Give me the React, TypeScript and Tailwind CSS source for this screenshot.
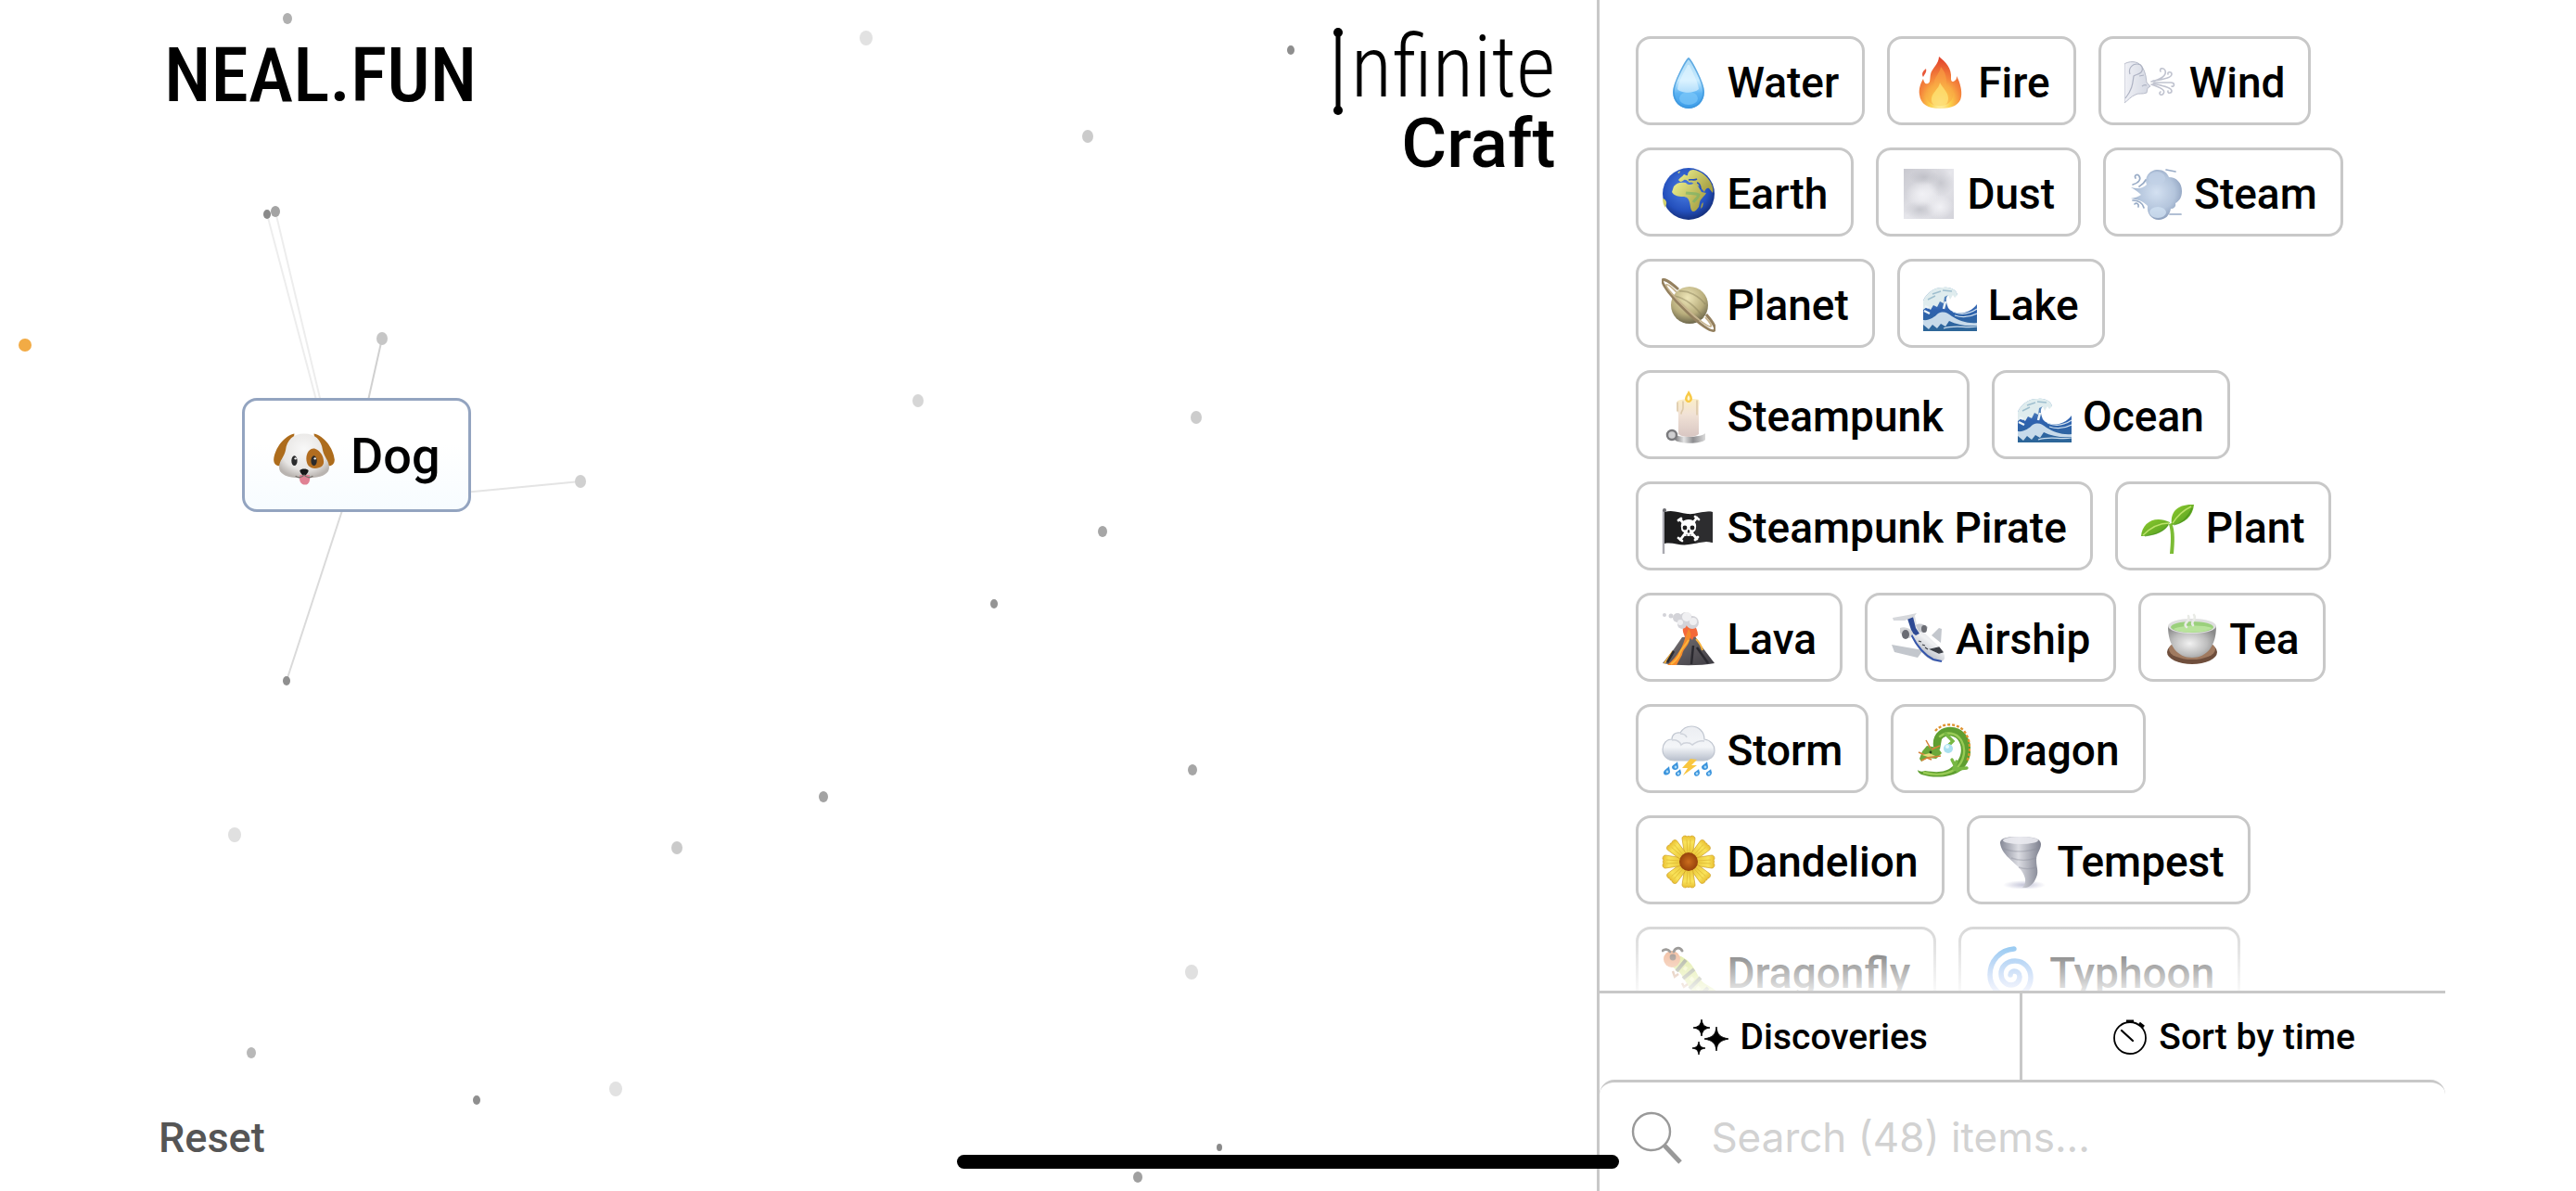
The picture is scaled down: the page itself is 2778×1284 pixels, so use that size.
import { useState } from 'react';
import type { ReactNode } from 'react';

/** Emoji-like drawings, all on a 58 x 58 grid. */
const icons: Record<string, ReactNode> = {
  droplet: (
    <>
      <defs>
        <linearGradient id="drop" x1="0" y1="0" x2="0" y2="1">
          <stop offset="0" stopColor="#a9d8f5" />
          <stop offset=".45" stopColor="#c9ecff" />
          <stop offset=".7" stopColor="#5db4f3" />
          <stop offset="1" stopColor="#3a9be8" />
        </linearGradient>
      </defs>
      <path d="M29 2C27 2 12 28 12 39c0 11 8 18 17 18s17-7 17-18C46 28 31 2 29 2z" fill="url(#drop)" />
      <path d="M29 3C27 4 13 28 13 39c0 10 7 17 16 17s16-7 16-17C45 28 31 4 29 3z" fill="none" stroke="#3d94d8" strokeWidth="1.6" opacity=".7" />
      <ellipse cx="29" cy="46" rx="10" ry="7" fill="#7cc8fa" opacity=".7" />
      <path d="M28 10c-2 5-10 17-11 26 4 5 18 5 23 0C39 27 31 14 30 10z" fill="#e6f7ff" opacity=".6" />
    </>
  ),
  fire: (
    <>
      <defs>
        <radialGradient id="fire" cx=".5" cy=".9" r=".85">
          <stop offset="0" stopColor="#fff8c0" />
          <stop offset=".28" stopColor="#fbd04a" />
          <stop offset=".58" stopColor="#f5883c" />
          <stop offset="1" stopColor="#e2452c" />
        </radialGradient>
      </defs>
      <path d="M28 1c7 6 14 12 13 24 0 3 2 4 4 2 2-1 2-3 2-5 4 7 6 16 5 22-1 9-10 13-23 13S8 52 7 42c-1-6 1-12 4-17 1 4 2 6 5 5 3-1 2-5 3-10 1-6 9-11 9-19z" fill="url(#fire)" />
      <path d="M30 12c5 6 6 10 6 17 0 5 4 7 6 9 4 8-3 16-13 16s-17-6-13-16c2-3 6-4 7-9 0-6 6-10 7-17z" fill="#f9a746" opacity=".55" />
      <path d="M29 29c3 6 9 10 9 17 0 6-4 9-9 9s-10-3-9-9c1-7 8-10 9-17z" fill="#fee777" opacity=".7" />
      <path d="M14 14c1 4-1 5-3 9-2-3-1-6 3-9z" fill="#e8583a" />
    </>
  ),
  wind: (
    <>
      <defs>
        <linearGradient id="face" x1="0" x2="1">
          <stop offset="0" stopColor="#f0f1f6" />
          <stop offset="1" stopColor="#d3d7e2" />
        </linearGradient>
      </defs>
      <path d="M0 9c4-3 14-4 18 2 3 3 4 7 5 11l1 7 4 4-3 2-1 5c-5 2-9 0-12 2C7 44 4 48 0 51z" fill="url(#face)" stroke="#b9bdcb" strokeWidth="1" />
      <path d="M6 20c-2-6 2-11 8-11 5 0 7 5 4 9-3 3-6 2-8 4-1 7-1 14-9 24M16 22l5-1M19 33c1-1 3-2 5-1" fill="none" stroke="#aeb3c3" strokeWidth="1.2" />
      <g fill="none" stroke="#c0c3cf" strokeWidth="1.6" strokeLinecap="round">
        <path d="M29 28c9-2 17-6 15-12-2-4-7-2-5 1M31 27c9-1 20-3 20-7 0-3-5-3-4 0M32 29h18c5 0 4 5 1 4M31 30c8 2 20 4 20 8 0 3-5 3-4 0M29 31c9 3 16 6 13 10-2 3-6 0-3-2" />
      </g>
    </>
  ),
  earth: (
    <>
      <defs>
        <radialGradient id="sea" cx=".45" cy=".4" r=".62">
          <stop offset="0" stopColor="#4f83e6" />
          <stop offset=".7" stopColor="#2450bd" />
          <stop offset="1" stopColor="#142d78" />
        </radialGradient>
        <linearGradient id="land" x1="0" x2="1" y2=".6">
          <stop offset="0" stopColor="#ecf08f" />
          <stop offset="1" stopColor="#a9a244" />
        </linearGradient>
      </defs>
      <circle cx="29" cy="29" r="28" fill="url(#sea)" />
      <g fill="url(#land)">
        <path d="M13 21c3-4 7-5 13-4 1 2 5 3 8 1l4 1 5 8 5 1c-2 4-6 6-7 10l-1 5c-2 3-4 5-6 5-3 0-3-7-4-10-1-4-3-6-7-6-5 0-10-1-12-5z" />
        <path d="M18 14c2-3 4-3 6-6 2 0 2 2 4 1 0-3 2-6 6-6 8 1 15 7 19 14 2 4 3 8 2 11l-4-5c-2-1-4 1-5 4l-5-6-6-2c-1-2-3-3-5-2-2-2-4-4-6-3-2 2-4 3-6 0z" />
        <path d="M1 34c2 0 5 3 4 6l-1 4C2 41 1 38 1 34zM43 40l2-2-1 5-2 2zM17 6l3-2-1 3z" />
      </g>
      <path d="M29 14c3-1 6 1 9-1M38 17c2 0 4 3 4 7" fill="none" stroke="#2450bd" strokeWidth="1.6" />
      <path d="M26 28c5 1 10 0 14 2-1 4-4 5-6 8" fill="none" stroke="#6fb06a" strokeWidth="3" opacity=".6" />
    </>
  ),
  dust: (
    <>
      <defs>
        <linearGradient id="dust" x1="0" y1="0" x2="1" y2="1">
          <stop offset="0" stopColor="#c9c9d0" />
          <stop offset=".3" stopColor="#d6d6dc" />
          <stop offset=".5" stopColor="#e6e6eb" />
          <stop offset="1" stopColor="#d3d3da" />
        </linearGradient>
        <radialGradient id="puffDark">
          <stop offset="0" stopColor="#b2b3bb" stopOpacity=".6" />
          <stop offset="1" stopColor="#b2b3bb" stopOpacity="0" />
        </radialGradient>
        <radialGradient id="puffLight">
          <stop offset="0" stopColor="#f1f1f5" />
          <stop offset="1" stopColor="#f1f1f5" stopOpacity="0" />
        </radialGradient>
      </defs>
      <path d="M2 2h54v54H2z" fill="url(#dust)" />
      <ellipse cx="42" cy="17" rx="14" ry="15" fill="url(#puffDark)" />
      <ellipse cx="19" cy="46" rx="17" ry="10" fill="url(#puffDark)" />
      <ellipse cx="24" cy="11" rx="16" ry="9" fill="url(#puffDark)" />
      <ellipse cx="22" cy="29" rx="18" ry="14" fill="url(#puffLight)" />
      <ellipse cx="41" cy="43" rx="15" ry="13" fill="url(#puffLight)" />
    </>
  ),
  steam: (
    <>
      <defs>
        <radialGradient id="steam" cx=".5" cy=".45" r=".6">
          <stop offset="0" stopColor="#d3e0f1" />
          <stop offset=".6" stopColor="#b4c5dc" />
          <stop offset="1" stopColor="#8497b6" />
        </radialGradient>
      </defs>
      <path d="M2 22c8 2 13 1 17-3-3-8 3-16 12-16 6 0 10 3 12 8 8 0 14 6 14 15 0 7-3 11-7 13 1 4-2 6-5 6-1 7-6 12-13 12-8 0-13-7-12-15-5-5-10-7-18-8 5-1 8-2 11-4-3-3-6-5-11-8z" fill="url(#steam)" />
      <ellipse cx="30" cy="12" rx="9" ry="7" fill="#c2d2e7" opacity=".7" />
      <ellipse cx="31" cy="49" rx="9" ry="6" fill="#d0e0f1" opacity=".8" />
      <path d="M4 19c7-2 9-6 7-9-2-3-6-1-4 2M18 14c-2 4-4 5-7 7M4 36c6 0 11 3 12 8M6 40c2-2 5 0 4 3M40 3l10 2M44 51h12" fill="none" stroke="#98abc6" strokeWidth="1.7" strokeLinecap="round" />
    </>
  ),
  planet: (
    <>
      <defs>
        <radialGradient id="saturn" cx=".45" cy=".3" r=".75">
          <stop offset="0" stopColor="#eee6b8" />
          <stop offset=".6" stopColor="#b8ad7c" />
          <stop offset="1" stopColor="#5e5942" />
        </radialGradient>
      </defs>
      <circle cx="30" cy="29" r="20" fill="url(#saturn)" />
      <path d="M19 14c10-1 21 5 28 14M13 19c12 2 25 12 32 24" fill="none" stroke="#877f58" strokeWidth="1.6" opacity=".45" />
      <path d="M18 12C8 3 2 0 1 2c-2 3 11 20 25 33 14 14 28 24 31 21 2-2-2-9-9-17" fill="none" stroke="#94805f" strokeWidth="3" />
      <path d="M16 15C10 9 6 6 5 7c-1 2 10 15 22 26 12 12 24 20 26 19 1-1-1-5-6-10" fill="none" stroke="#c7b48e" strokeWidth="1.8" />
    </>
  ),
  wave: (
    <>
      <defs>
        <linearGradient id="wave" x1="0" y1="0" x2="0" y2="1">
          <stop offset="0" stopColor="#7fa9c9" />
          <stop offset=".5" stopColor="#2f62b0" />
          <stop offset="1" stopColor="#2d6698" />
        </linearGradient>
      </defs>
      <path d="M0 24C4 15 13 9 22 10c8-1 14 3 15 8-3-1-6 0-9-1-5 4-3 9-1 15 6 8 22 8 31-4v29H0z" fill="url(#wave)" />
      <path d="M0 24C4 15 13 9 22 10c8-1 14 3 15 8l-3 3-2-3-3 5-2-5-4 2-1 7-4-2-3 6-4-2-3 5-4-3-4 3z" fill="#dfecee" />
      <path d="M21 13l10 1M10 17l9-3M5 23l8-4" stroke="#9fbfcf" strokeWidth="1.4" fill="none" />
      <path d="M16 38c6-3 10-1 15 3 8 5 17 8 27 7v3c-12 1-22-1-30-5l-4 6-5-3-4 5-5-4-4 5-6-5v-5c6 1 12-3 16-7z" fill="#d8e7f2" opacity=".9" />
      <path d="M32 36c9 4 17 3 26-3M34 40c9 3 16 2 24-2M22 54c12-4 24 0 36-2" fill="none" stroke="#cfe0ef" strokeWidth="1.2" />
      <path d="M1 35l6 3M2 30l4 2M24 25l-2 8" stroke="#edf4f7" strokeWidth="2.5" />
    </>
  ),
  candle: (
    <>
      <defs>
        <linearGradient id="wax" x1="0" y1="0" x2="0" y2="1">
          <stop offset="0" stopColor="#fbeec8" />
          <stop offset=".4" stopColor="#f1e2d6" />
          <stop offset="1" stopColor="#d8c6c2" />
        </linearGradient>
        <linearGradient id="tin" x1="0" x2="1">
          <stop offset="0" stopColor="#77777a" />
          <stop offset=".3" stopColor="#e4e4e4" />
          <stop offset=".6" stopColor="#8d8d90" />
          <stop offset="1" stopColor="#dadada" />
        </linearGradient>
      </defs>
      <path d="M14 48c2 4 29 4 33-1v7c-4 5-29 5-33 0z" fill="url(#tin)" />
      <circle cx="11" cy="49" r="5" fill="#cfcfd1" stroke="#7a7a7d" strokeWidth="2.5" />
      <path d="M17 12c4-2 19-3 23-1 1 3 0 6 0 9v28c-4 4-18 4-22 0V26c-2-4-2-10-1-14z" fill="url(#wax)" />
      <path d="M17 14v9M23 13v7c0 3-2 3-2 6M38 12v15" fill="none" stroke="#dcc9a8" strokeWidth="1.6" strokeLinecap="round" />
      <path d="M29 1c2 3 4 6 4 9 0 2-2 4-4 4s-4-2-4-4c0-3 3-6 4-9z" fill="#f8c946" />
      <path d="M29 6c2 3 2 5 0 6-2-1-2-3 0-6z" fill="#fff6cf" />
    </>
  ),
  flag: (
    <>
      <path d="M2 10v47" stroke="#a9a9b0" strokeWidth="2.4" />
      <circle cx="3" cy="10" r="2" fill="#6b6b70" />
      <path d="M3 12c9-3 16 1 25 2 9 1 17-4 27-2v33c-9-3-17 1-26 2-9 2-17-3-26-1z" fill="#1d1d1e" />
      <path d="M36 14c7-1 12-3 19-2v33c-6-2-12-1-19 1z" fill="#343436" opacity=".7" />
      <g stroke="#fff" strokeWidth="2.8" strokeLinecap="round">
        <path d="M20 20l18 21M38 18L20 42M18 21l3-2M36 17l4 3M18 40l4 3M36 42l3-3" />
      </g>
      <path d="M29 20c6 0 9 4 8 9 0 3-2 4-3 5v4H24v-4c-2-1-3-2-3-5-1-5 2-9 8-9z" fill="#fff" />
      <circle cx="25" cy="29" r="2.4" fill="#1d1d1e" />
      <circle cx="33" cy="29" r="2.4" fill="#1d1d1e" />
      <path d="M29 31l1 3h-2zM27 36v2M31 36v2" fill="#1d1d1e" stroke="#1d1d1e" strokeWidth=".8" />
    </>
  ),
  plant: (
    <>
      <defs>
        <linearGradient id="leaf" x1="0" y1="0" x2="1" y2="1">
          <stop offset="0" stopColor="#8fcc2f" />
          <stop offset="1" stopColor="#4f9b20" />
        </linearGradient>
      </defs>
      <path d="M33 24c4 8 3 22 2 33h-4c1-11 2-22-1-32z" fill="#7cbc35" />
      <path d="M33 26C31 12 39 3 57 4c-1 12-10 21-24 22z" fill="url(#leaf)" />
      <path d="M0 38C1 24 14 15 31 23 27 33 14 38 0 38z" fill="url(#leaf)" />
      <path d="M34 24c5-8 12-14 20-18M2 37c8-8 17-13 28-13" fill="none" stroke="#bde36a" strokeWidth="1.4" />
      <path d="M35 26c8-1 16-8 20-18M4 38c8-1 20-4 25-12" fill="none" stroke="#3f8a19" strokeWidth="1.2" opacity=".6" />
    </>
  ),
  volcano: (
    <>
      <defs>
        <linearGradient id="rock" x1="0" y1="0" x2="1" y2="1">
          <stop offset="0" stopColor="#7b7678" />
          <stop offset="1" stopColor="#3d3b42" />
        </linearGradient>
      </defs>
      <path d="M22 27l14-1 8 12 13 17c-16 3-40 3-56 0l12-15z" fill="url(#rock)" />
      <path d="M24 24c-3-7 0-12 4-15 6 2 11 8 11 16-2 1-3 3-4 1l-2 4-3-3-3 5z" fill="#f4683a" />
      <path d="M29 18c3 5 3 7 1 12-2 8-7 9-8 16l-6 11H6c6-5 10-10 13-15 4-5 5-12 10-24z" fill="#f58a2c" />
      <path d="M29 30c-4 7-9 10-10 16-2 4-6 8-9 10M12 42L3 55M37 29c4 4 6 8 7 12" fill="none" stroke="#fcb53c" strokeWidth="1.8" />
      <path d="M34 36l-2 20M38 38l12 17M13 42l-7 12" stroke="#2b2a30" strokeWidth="2.5" />
      <g fill="#d3d3d8">
        <circle cx="17" cy="6" r="5" />
        <circle cx="10" cy="4" r="2.5" />
        <circle cx="3" cy="3" r="2" />
        <circle cx="26" cy="7" r="7" />
        <circle cx="33" cy="11" r="7" />
        <circle cx="22" cy="13" r="5" />
      </g>
      <g fill="#f0f0f2">
        <circle cx="27" cy="5" r="5" />
        <circle cx="34" cy="10" r="4" />
        <circle cx="20" cy="11" r="3" />
      </g>
    </>
  ),
  plane: (
    <>
      <defs>
        <linearGradient id="hull" x1=".2" y1="1" x2=".8" y2="0">
          <stop offset="0" stopColor="#8d94a2" />
          <stop offset=".5" stopColor="#f0f1f3" />
          <stop offset="1" stopColor="#c6c9cf" />
        </linearGradient>
      </defs>
      <path d="M1 35l3 8 25 6 6-8zM44 25l8-8 3 1-1 15z" fill="#c3c7cd" />
      <path d="M18 5l8-1 3 13 8 6 14 13c5 5 8 10 7 14-2 5-9 4-15 1-9-5-16-15-20-24z" fill="url(#hull)" />
      <path d="M17 4l7 1 3 12 4 6-4 2-4-3z" fill="#2e4a94" />
      <path d="M22 24c7 14 14 22 24 27l9 2" fill="none" stroke="#3556ac" strokeWidth="2" />
      <path d="M2 6l17-3 9-2-3 4-10 4L3 9z" fill="#d6d8dc" />
      <path d="M10 17c5-2 11 0 14 5l-3 6c-5 0-9-3-11-6z" fill="#d5d6d8" />
      <path d="M27 14c4-3 9-1 13 2l-2 6-8-1z" fill="#c9cbd0" />
      <ellipse cx="16" cy="24" rx="4" ry="5" fill="#6a6c73" />
      <ellipse cx="36" cy="18" rx="3" ry="4" fill="#6a6c73" />
      <path d="M43 40l9-2 4 5-4 1zM30 31l3 1M34 35l3 1M37 38l3 2" fill="#3c3f46" stroke="#3c3f46" strokeWidth="1.2" />
    </>
  ),
  tea: (
    <>
      <defs>
        <radialGradient id="cup" cx=".45" cy=".55" r=".6">
          <stop offset="0" stopColor="#f2f2f2" />
          <stop offset=".6" stopColor="#bdbdbd" />
          <stop offset="1" stopColor="#8a8a8a" />
        </radialGradient>
      </defs>
      <ellipse cx="30" cy="43" rx="27" ry="13" fill="#6f4e3c" />
      <ellipse cx="30" cy="40" rx="25" ry="11" fill="#a07a60" />
      <path d="M4 15c0 21 10 34 26 34s26-13 26-34z" fill="url(#cup)" />
      <ellipse cx="30" cy="15" rx="26" ry="8" fill="#dedede" />
      <ellipse cx="30" cy="16" rx="23" ry="6" fill="#9bd07c" />
      <path d="M10 18c8-4 31-5 42-1-7 5-33 7-42 1z" fill="#b9e39c" />
      <path d="M24 16c-5-4 5-6 2-12M31 14c-4-4 5-6 1-11" fill="none" stroke="#e9ebe6" strokeWidth="2.6" strokeLinecap="round" />
    </>
  ),
  storm: (
    <>
      <defs>
        <linearGradient id="cloud" x1="0" y1="0" x2="0" y2="1">
          <stop offset="0" stopColor="#eceef2" />
          <stop offset=".6" stopColor="#f3f5f8" />
          <stop offset="1" stopColor="#b8bfcc" />
        </linearGradient>
      </defs>
      <path d="M14 40C6 40 1 35 1 28c0-6 4-11 10-11 0-5 4-8 9-7 3-5 8-7 12-7 8 0 14 6 14 14 7 1 11 6 11 12 0 7-6 11-12 11z" fill="url(#cloud)" stroke="#c0c6d0" strokeWidth="1.2" />
      <path d="M11 18c5-1 9 2 10 5 3-3 9-3 12 0 4-3 9-5 13-4M20 11c3 0 6 1 7 4" fill="none" stroke="#cfd3db" strokeWidth="1.6" />
      <path d="M31 38L22 48h6l-5 8 15-11h-6l6-6z" fill="#f9c63f" />
      <g fill="#3a93dc">
        <path d="M8 46c-1 2-6 4-6 7 0 4 7 3 7-1zM17 41c-1 2-6 4-6 6 0 4 7 4 7 0zM20 49c-1 2-6 3-5 6 1 3 6 2 6-2zM40 49c-1 2-6 3-5 6 1 3 6 2 6-2zM49 41c-1 2-6 4-6 6 0 4 7 4 7 0zM53 49c-1 2-6 3-5 6 1 3 6 2 6-2z" />
      </g>
      <g fill="#a9d9f8">
        <circle cx="6" cy="52" r="1.4" />
        <circle cx="15" cy="47" r="1.4" />
        <circle cx="18" cy="54" r="1.4" />
        <circle cx="38" cy="54" r="1.4" />
        <circle cx="47" cy="47" r="1.4" />
        <circle cx="51" cy="54" r="1.4" />
      </g>
    </>
  ),
  dragon: (
    <>
      <path d="M1 50c2 2 5 2 8 1 13 2 22 2 30-5 9-8 12-20 5-29-5-5-13-5-17 0l-2 11-7-3c-1-7 1-13 6-17 9-7 22-5 29 4 9 12 6 28-4 38-12 9-31 9-44 5-2-1-4-3-4-5z" fill="#5f9f31" />
      <path d="M8 53c12 3 25 2 34-4 9-8 12-21 6-31C43 10 32 8 25 14" fill="none" stroke="#98cb55" strokeWidth="2.4" strokeLinecap="round" />
      <path d="M20 8C28-1 43-1 51 8c7 9 8 22 3 33" fill="none" stroke="#e0932f" strokeWidth="2.4" strokeDasharray="3 2" />
      <path d="M11 24l12 2 4 6-6 6-9-1-7 4-2-3 3-8z" fill="#6ca83a" />
      <path d="M10 18l5 9M2 31l7 3M16 28l9-4M5 40l6-3 5 2M11 37l15-2" fill="none" stroke="#d6803a" strokeWidth="1.5" />
      <path d="M6 34l8-2 6 3-8 1z" fill="#e4dc7a" />
      <circle cx="15" cy="31" r="1.4" fill="#26431a" />
      <path d="M31 11l8 8-5 5M38 39l6 12M43 41l-3 8M44 49l10-1" fill="none" stroke="#78b843" strokeWidth="3.4" strokeLinecap="round" />
      <circle cx="34" cy="27" r="5" fill="#a9e0ef" />
      <circle cx="33" cy="25" r="2" fill="#e4f8fd" />
    </>
  ),
  blossom: (
    <>
      <defs>
        <linearGradient id="petal" x1="0" y1="0" x2="0" y2="1">
          <stop offset="0" stopColor="#e9be31" />
          <stop offset=".3" stopColor="#f9e35a" />
          <stop offset="1" stopColor="#e8c232" />
        </linearGradient>
        <radialGradient id="pollen">
          <stop offset="0" stopColor="#cb6d1d" />
          <stop offset="1" stopColor="#96420b" />
        </radialGradient>
      </defs>
      {[0, 45, 90, 135, 180, 225, 270, 315].map((angle) => (
        <g key={angle} transform={`rotate(${angle} 29 29)`}>
          <path d="M25 24L22 4c0-3 3-3 4-3 1 1 2 1 3 0 1 1 2 1 3 0 2 0 4 1 4 3l-3 20z" fill="url(#petal)" stroke="#cf9f24" strokeWidth=".7" />
          <path d="M27 5l1 15M31 5l-1 15" stroke="#dcb832" strokeWidth=".7" />
        </g>
      ))}
      <circle cx="29" cy="29" r="10" fill="url(#pollen)" />
    </>
  ),
  tornado: (
    <>
      <defs>
        <linearGradient id="funnel" x1="0" x2="1">
          <stop offset="0" stopColor="#858896" />
          <stop offset=".45" stopColor="#dcdde3" />
          <stop offset="1" stopColor="#7d808e" />
        </linearGradient>
        <radialGradient id="swirl">
          <stop offset="0" stopColor="#c3c4d8" />
          <stop offset="1" stopColor="#c3c4d8" stopOpacity="0" />
        </radialGradient>
      </defs>
      <ellipse cx="34" cy="54" rx="23" ry="5" fill="url(#swirl)" />
      <path d="M8 9C8 2 20 2 30 2s22 1 22 8c0 6-5 10-5 17 0 10 4 13-2 23-2 3-5 6-9 7h-4c4-5 4-9 1-15C28 31 10 24 8 9z" fill="url(#funnel)" />
      <path d="M12 15c10 4 26 4 38-1M20 25c8 3 18 3 27 0M28 35c6 2 13 2 19 0" fill="none" stroke="#8b8e9b" strokeWidth="1.4" opacity=".4" />
      <ellipse cx="30" cy="6" rx="19" ry="4" fill="#eaeaef" opacity=".9" />
    </>
  ),
  bug: (
    <>
      <path d="M18 18c12 6 12 17 21 26 6 6 14 6 18 14" fill="none" stroke="#c5d94c" strokeWidth="15" strokeLinecap="round" />
      <path d="M16 27l10-12M23 35l12-10M30 46l12-12M40 54l10-9" stroke="#57603a" strokeWidth="4" />
      <path d="M24 23l3 2M31 34l3 3M38 44l3 3" stroke="#e9f08f" strokeWidth="4" />
      <path d="M12 27l2 6 4-3M22 40l2 4 4-3M31 50l2 4 3-3" fill="none" stroke="#b26b3c" strokeWidth="2.4" />
      <circle cx="11" cy="14" r="9" fill="#e58148" />
      <circle cx="12" cy="12" r="3.4" fill="#4a3326" />
      <path d="M9 6C7 3 3 3 1 5M13 6c2-5 7-5 9-1" fill="none" stroke="#3d3a36" strokeWidth="2.8" strokeLinecap="round" />
    </>
  ),
  cyclone: (
    <>
      <defs>
        <linearGradient id="spiral" x1="0" y1="0" x2="0" y2="1">
          <stop offset="0" stopColor="#3d9be6" />
          <stop offset="1" stopColor="#7f97ea" />
        </linearGradient>
      </defs>
      <path d="M32 3C17 4 6 16 6 31c0 13 10 23 23 23 12 0 21-9 21-20 0-10-7-18-17-18-9 0-15 6-15 14 0 7 5 12 11 12 5 0 9-4 9-9 0-4-3-6-6-6-2 0-4 2-4 4" fill="none" stroke="url(#spiral)" strokeWidth="5.5" strokeLinecap="round" />
    </>
  ),
  dog: (
    <g transform="translate(0 7)">
      <defs>
        <radialGradient id="head" cx=".5" cy=".35" r=".65">
          <stop offset="0" stopColor="#f8f8f8" />
          <stop offset=".7" stopColor="#e7e5e3" />
          <stop offset="1" stopColor="#b9b4b0" />
        </radialGradient>
      </defs>
      <path d="M20 1C11 3 2 14 1 25c0 5 4 7 8 5l9-12zM38 1c9 2 18 13 19 24 0 5-4 7-8 5l-9-12z" fill="#ad6c1c" />
      <path d="M29 1c10 0 16 6 17 15 1 6 6 10 6 16 0 7-8 10-23 10S6 39 6 32c0-6 5-10 6-16C13 7 19 1 29 1z" fill="url(#head)" />
      <path d="M39 15c5 2 8 7 8 12 0 4-3 6-8 6s-8-3-8-9 4-10 8-9z" fill="#b26d20" />
      <ellipse cx="20" cy="26" rx="2.7" ry="4.6" fill="#2b2b2c" />
      <ellipse cx="38" cy="26" rx="2.7" ry="4.6" fill="#2b2b2c" />
      <circle cx="21" cy="24" r="1" fill="#f5f5f5" />
      <circle cx="39" cy="24" r="1" fill="#f5f5f5" />
      <path d="M25 39h9c1 6-1 9-4 9-4 0-6-3-5-9z" fill="#e08193" />
      <path d="M25 35c1-2 7-2 8 0 0 2-3 5-4 5s-4-3-4-5z" fill="#171717" />
      <path d="M29 39c-2 3-6 3-8 1M29 39c2 3 6 3 8 1" fill="none" stroke="#77716c" strokeWidth="1.1" />
    </g>
  ),
};

const items = [
  { icon: 'droplet', label: 'Water' },
  { icon: 'fire', label: 'Fire' },
  { icon: 'wind', label: 'Wind' },
  { icon: 'earth', label: 'Earth' },
  { icon: 'dust', label: 'Dust' },
  { icon: 'steam', label: 'Steam' },
  { icon: 'planet', label: 'Planet' },
  { icon: 'wave', label: 'Lake' },
  { icon: 'candle', label: 'Steampunk' },
  { icon: 'wave', label: 'Ocean' },
  { icon: 'flag', label: 'Steampunk Pirate' },
  { icon: 'plant', label: 'Plant' },
  { icon: 'volcano', label: 'Lava' },
  { icon: 'plane', label: 'Airship' },
  { icon: 'tea', label: 'Tea' },
  { icon: 'storm', label: 'Storm' },
  { icon: 'dragon', label: 'Dragon' },
  { icon: 'blossom', label: 'Dandelion' },
  { icon: 'tornado', label: 'Tempest' },
  { icon: 'bug', label: 'Dragonfly' },
  { icon: 'cyclone', label: 'Typhoon' },
];

/** Background particles: x, y, radius, colour */
const dots: [number, number, number, string][] = [
  [310, 20, 5, '#b0b0b0'],
  [934, 41, 7, '#e2e2e2'],
  [1392, 54, 4, '#8e8e8e'],
  [1173, 147, 6, '#cbcbcb'],
  [288, 231, 4, '#8a8a8a'],
  [297, 228, 5, '#a3a3a3'],
  [412, 365, 6, '#c6c6c6'],
  [990, 432, 6, '#d6d6d6'],
  [1290, 450, 6, '#cccccc'],
  [626, 519, 6, '#d0d0d0'],
  [1189, 573, 5, '#a6a6a6'],
  [1072, 651, 4, '#949494'],
  [309, 734, 4, '#8f8f8f'],
  [1286, 830, 5, '#a6a6a6'],
  [888, 859, 5, '#a3a3a3'],
  [730, 914, 6, '#cacaca'],
  [253, 900, 7, '#e0e0e0'],
  [1285, 1048, 7, '#e0e0e0'],
  [271, 1135, 5, '#b8b8b8'],
  [514, 1186, 4, '#8f8f8f'],
  [664, 1174, 7, '#e2e2e2'],
  [1315, 1237, 3, '#8a8a8a'],
  [1227, 1269, 5, '#a0a0a0'],
];

function Emoji({ name, className }: { name: string; className: string }) {
  return (
    <svg viewBox="0 0 58 58" className={className} aria-hidden>
      {icons[name]}
    </svg>
  );
}

function Item({ icon, label }: { icon: string; label: string }) {
  return (
    <button className="flex items-center gap-3 rounded-2xl border-3 border-[#c8c8c8] bg-white px-[25px] pt-[18px] pb-[14px] text-[46px] leading-[58px] font-medium whitespace-nowrap text-black">
      <Emoji name={icon} className="size-[58px] shrink-0" />
      {label}
    </button>
  );
}

function Particles() {
  return (
    <svg className="pointer-events-none absolute inset-0 size-full" aria-hidden>
      <g strokeWidth="2">
        <path d="M288 231L346 450M297 228L350 450" stroke="#ededed" />
        <path d="M412 365L394 445" stroke="#d0d0d0" />
        <path d="M626 519L500 531" stroke="#e4e4e4" />
        <path d="M309 734L374 535" stroke="#dadada" />
      </g>
      {dots.map(([x, y, r, fill]) => (
        <ellipse key={`${x}-${y}`} cx={x} cy={y} rx={r} ry={r + 1} fill={fill} />
      ))}
      <circle cx="27" cy="372" r="7" fill="#f2ab45" />
    </svg>
  );
}

function Canvas() {
  return (
    <main className="relative flex min-w-0 flex-1 flex-col justify-between overflow-hidden">
      <Particles />
      <header className="relative flex items-start justify-between pt-7 pr-[45px] pl-[177px]">
        <a href="/" className="font-['Roboto_Condensed',Roboto,sans-serif] text-[82px] leading-[106px] font-medium text-black">
          NEAL.FUN
        </a>
        <h1 className="flex flex-col items-end text-black">
          <span className="flex items-start">
            <svg viewBox="0 0 12 94" className="mt-0.5 mr-2 h-[94px] w-3" role="img" aria-label="I">
              <path d="M6 5v84" stroke="#000" strokeWidth="5" />
              <circle cx="6" cy="5" r="5" />
              <circle cx="6" cy="89" r="5" />
            </svg>
            <span className="font-['Roboto_Condensed',Roboto,sans-serif] text-[92px] leading-[90px] font-light">nfinite</span>
          </span>
          <span className="-mt-2.5 text-[75px] leading-[80px] font-medium">Craft</span>
        </h1>
      </header>

      <div className="absolute top-[429px] left-[261px] flex items-center gap-4 rounded-2xl border-3 border-[#93a4c0] bg-linear-to-b from-white from-40% to-[#f7fcff] px-[30px] pt-[30px] pb-[27px] text-[54px] leading-[60px] font-medium text-black">
        <Emoji name="dog" className="-my-1 size-[68px]" />
        Dog
      </div>

      <footer className="relative pb-6 pl-[171px]">
        <button className="text-[45px] leading-[66px] font-medium text-[#555]">Reset</button>
      </footer>
    </main>
  );
}

function Sidebar() {
  const [query, setQuery] = useState('');
  const shown = items.filter(({ label }) => label.toLowerCase().includes(query.toLowerCase()));

  return (
    <aside className="flex w-[38%] shrink-0 flex-col border-l-3 border-[#c8c8c8] pr-[141px]">
      <div className="relative min-h-0 flex-1 overflow-hidden">
        <div className="flex flex-wrap gap-6 pt-[39px] pr-[60px] pl-[39px]">
          {shown.map((item) => (
            <Item key={item.label} {...item} />
          ))}
        </div>
        <div className="pointer-events-none absolute inset-x-0 bottom-0 h-[100px] bg-linear-to-b from-white/0 to-white/90" />
      </div>

      <div className="grid grid-cols-2 border-t-3 border-[#c8c8c8] text-[39px] leading-[46px] font-medium text-black">
        <button className="flex items-center justify-center gap-3 border-r-3 border-[#c8c8c8] pt-6 pb-[23px]">
          <svg viewBox="0 0 40 38" className="h-[38px] w-10" aria-hidden>
            <path d="M10 0c1 6 3 8 9 9-6 1-8 3-9 9-1-6-3-8-9-9 6-1 8-3 9-9zM26 8c1 9 4 11 13 13-9 2-12 4-13 13-1-9-4-11-13-13 9-2 12-4 13-13zM7 24c1 5 2 6 7 7-5 1-6 2-7 7-1-5-2-6-7-7 5-1 6-2 7-7z" stroke="#000" strokeWidth=".9" />
          </svg>
          Discoveries
        </button>
        <button className="flex items-center justify-center gap-3 pt-6 pb-[23px]">
          <svg viewBox="0 0 38 38" className="size-[38px]" fill="none" stroke="#000" aria-hidden>
            <circle cx="19" cy="20" r="17" strokeWidth="1.8" />
            <path d="M15 2h8M29 4l5 4" strokeWidth="3" />
            <path d="M10 12l12 11" strokeWidth="2.2" strokeLinecap="round" />
          </svg>
          Sort by time
        </button>
      </div>

      <label className="flex items-center gap-[30px] rounded-t-2xl border-t-3 border-[#c8c8c8] pt-[26px] pb-[25px] pl-[34px]">
        <svg viewBox="0 0 56 58" className="h-[58px] w-14 shrink-0" fill="none" stroke="#999" role="img" aria-label="Search">
          <circle cx="22" cy="23" r="20" strokeWidth="2.4" />
          <path d="M36 38l17 18" strokeWidth="5" />
        </svg>
        <input
          type="text"
          value={query}
          onChange={(e) => setQuery(e.target.value)}
          placeholder="Search (48) items..."
          className="h-[66px] min-w-0 flex-1 bg-transparent font-[Inter,sans-serif] text-[44px] text-black outline-none placeholder:text-[#d2d2d2]"
        />
      </label>
    </aside>
  );
}

export default function App() {
  return (
    <div className="relative flex h-screen overflow-hidden bg-white font-[Roboto,sans-serif]">
      <Canvas />
      <Sidebar />
      {/* home indicator */}
      <div className="absolute bottom-6 left-1/2 h-[15px] w-[714px] -translate-x-1/2 rounded-full bg-black" />
    </div>
  );
}
